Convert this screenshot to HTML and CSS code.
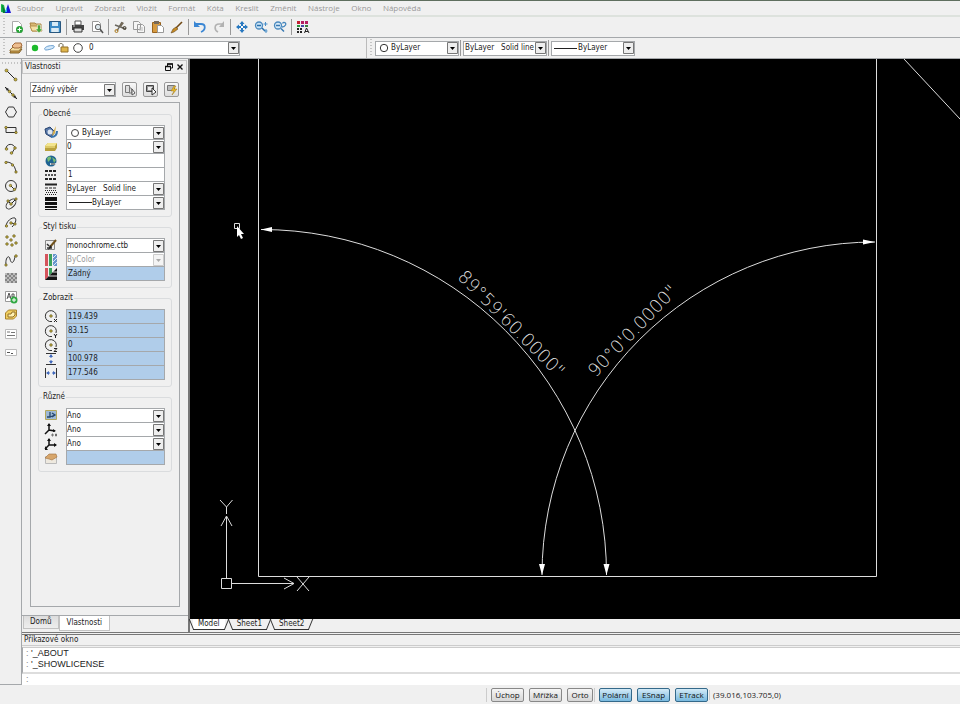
FILE: index.html
```html
<!DOCTYPE html>
<html lang="cs">
<head>
  <meta charset="UTF-8" />
  <meta name="viewport" content="width=device-width, initial-scale=1.0" />
  <title>CAD</title>
  <link rel="stylesheet" href="styles.css">
</head>
<body>
  <nav class="menubar">
    <svg class="logo" viewBox="0 0 12 12"><path d="M1 2l3 1 2 8-5-1z" fill="#18b848"/><path d="M2 2l4 9H3z" fill="#087a35"/><path d="M8 2l3 9H5z" fill="#1717d8"/><path d="M7 5v5H5z" fill="#20c0e8"/></svg>
    <div class="menu">
      <a href="#">Soubor</a>
      <a href="#">Upravit</a>
      <a href="#">Zobrazit</a>
      <a href="#">Vložit</a>
      <a href="#">Formát</a>
      <a href="#">Kóta</a>
      <a href="#">Kreslit</a>
      <a href="#">Změnit</a>
      <a href="#">Nástroje</a>
      <a href="#">Okno</a>
      <a href="#">Nápověda</a>
    </div>
  </nav>

  <!-- Standard toolbar -->
  <div class="toolbar">
    <span class="grip"></span>
    <button class="icon-btn" aria-label="Nový"><svg viewBox="0 0 14 14"><path d="M2.500 1.500h6l3 3v8h-9z" fill="#fff" stroke="#aaa"/><circle cx="9.500" cy="9.500" r="3.500" fill="#28a338"/><path d="M9.500 7.500v4M7.500 9.500h4" stroke="#fff"/></svg></button>
    <button class="icon-btn" aria-label="Otevřít"><svg viewBox="0 0 14 14"><path d="M1 3h5l1 1h5v7H3z" fill="#d8b873" stroke="#ac8646"/><path d="M1 6h10l2 5H3z" fill="#f5dfa2" stroke="#b79350"/><path d="M8.500 5v4h-2l3.500 4 3.500-4h-2V5z" fill="#4aa636" stroke="#fff" stroke-width=".5"/></svg></button>
    <button class="icon-btn" aria-label="Uložit"><svg viewBox="0 0 14 14"><path d="M1.500 1.500h11v11h-11z" fill="#3c8ac6" stroke="#28577f"/><path d="M4 2h6v4H4z" fill="#d6eaf6"/><path d="M3 8h8v4H3z" fill="#b7d6e9"/><path d="M4 9h6M4 11h6" stroke="#fff"/></svg></button>
    <span class="sep"></span>
    <button class="icon-btn" aria-label="Tisk"><svg viewBox="0 0 14 14"><path d="M4 1h6v4H4z" fill="#fff" stroke="#555"/><path d="M1 5h12v5H1z" fill="#444"/><path d="M3 8h8v4H3z" fill="#ddd" stroke="#333"/><path d="M2 6h2" stroke="#ccc"/></svg></button>
    <button class="icon-btn" aria-label="Náhled"><svg viewBox="0 0 14 14"><path d="M2.500 1.500h6l2 2v8h-8z" fill="#fff" stroke="#999"/><circle cx="8" cy="7" r="2.700" fill="#dce6eb" stroke="#666"/><path d="M10 9l3 4" stroke="#555" stroke-width="1.500"/></svg></button>
    <span class="sep"></span>
    <button class="icon-btn" aria-label="Vyjmout"><svg viewBox="0 0 14 14"><path d="M2 5l11 4M9 2L4 11" stroke="#6b6860" stroke-width="1.500"/><path d="M6 6l3-4 2 1-3 4z" fill="#746a58"/><circle cx="11.500" cy="8" r="1.500" fill="none" stroke="#423b2c"/><circle cx="3.500" cy="11" r="1.500" fill="none" stroke="#ac7b1f"/></svg></button>
    <button class="icon-btn" aria-label="Kopírovat"><svg viewBox="0 0 14 14"><path d="M1.500 1.500h5l2 2v6h-7zM5.500 4.500h5l2 2v6h-7z" fill="#f5f5f5" stroke="#999"/><path d="M7 8h4M7 10h4" stroke="#bbb"/></svg></button>
    <button class="icon-btn" aria-label="Vložit"><svg viewBox="0 0 14 14"><path d="M1.500 2.500h8v10h-8z" fill="#d69a40" stroke="#98631e"/><path d="M3 1h5v3H3z" fill="#776958"/><path d="M6.500 5.500h4l2 2v5h-6z" fill="#fff" stroke="#999"/></svg></button>
    <button class="icon-btn" aria-label="Štětec"><svg viewBox="0 0 14 14"><path d="M12 2L6 8" stroke="#704814" stroke-width="1.600"/><path d="M6 7l2 2-4 3-3 1 2-4z" fill="#c58a24" stroke="#533816" stroke-width=".5"/></svg></button>
    <span class="sep"></span>
    <button class="icon-btn" aria-label="Zpět"><svg viewBox="0 0 14 14"><path d="M3 4h5c5 0 5 6 0 8" fill="none" stroke="#3b87d4" stroke-width="1.800"/><path d="M1 1v6h6z" fill="#3b87d4"/></svg></button>
    <button class="icon-btn" aria-label="Znovu"><svg viewBox="0 0 14 14"><path d="M11 4H7c-5 0-5 6-1 8" fill="none" stroke="#b2b2b2" stroke-width="1.600"/><path d="M12 1v6H7z" fill="#b2b2b2"/></svg></button>
    <span class="sep"></span>
    <button class="icon-btn" aria-label="Posun"><svg viewBox="0 0 14 14"><path d="M7 1l2.500 3H8v2h2V4.500L13 7l-3 2.500V8H8v2h1.500L7 13l-2.500-3H6V8H4v1.500L1 7l3-2.500V6h2V4H4.500z" fill="#2878c0"/><path d="M6 6h2v2H6z" fill="#fff"/></svg></button>
    <button class="icon-btn" aria-label="Zoom"><svg viewBox="0 0 14 14"><circle cx="5" cy="5.500" r="3.500" fill="#cbe4f7" stroke="#4c8abf" stroke-width="1.300"/><path d="M3 5.500h4M8 8l3 3" stroke="#2870ad" stroke-width="1.500"/><path d="M11.500 2v4M9.500 4h4M12 9v4M10.500 11h3" stroke="#4a90ca"/></svg></button>
    <button class="icon-btn" aria-label="Předchozí zoom"><svg viewBox="0 0 14 14"><circle cx="5" cy="5.500" r="3.500" fill="#d8ebf8" stroke="#4c8abf" stroke-width="1.300"/><path d="M3 5.500h4M8 8.500l3 3" stroke="#3979b2" stroke-width="1.500"/><path d="M9.500 3.500c1-2 4-1 3 1.500-1 2-2 2-3.500 2" fill="none" stroke="#4687bd" stroke-width="1.300"/></svg></button>
    <span class="sep"></span>
    <button class="icon-btn" aria-label="Vlastnosti"><svg viewBox="0 0 14 14"><path d="M1 1h3v3H1z" fill="#c41f32"/><path d="M5 1h3v3H5zM9 1h3v3H9z" fill="#b52060"/><path d="M1 5h3v2H1z" fill="#27963c"/><path d="M5 5h3v2H5z" fill="#4250a8"/><path d="M9 5h3v2H9z" fill="#39803c"/><path d="M1 9h6M1 12h6" stroke="#222" stroke-width="2" stroke-dasharray="2 1"/><path d="M8.500 13l2-5 2.500 5M9 11.500h3" fill="none" stroke="#222"/></svg></button>
  </div>

  <!-- Layers and object properties -->
  <div class="toolbar layers">
    <span class="grip"></span>
    <button class="icon-btn" aria-label="Hladiny"><svg viewBox="0 0 14 14"><path d="M1 11l3-3h9l-3 4H1z" fill="#c69a45" stroke="#80602b"/><path d="M1 9l3-3h9l-3 4H1z" fill="#f3dd9e" stroke="#977339"/><path d="M3 5l3-3h6l1 3-3 2H5z" fill="#edbe90" stroke="#a36b3c"/></svg></button>
    <span class="combo layer-combo">
      <svg class="layer-state" viewBox="0 0 54 12"><circle cx="5" cy="6" r="3.200" fill="#1dbb2c"/><path d="M15 6c1-2 7-3 9-2 2 2-5 4-8 4-1 0-2-1-1-2z" fill="#d6eafa" stroke="#6a9ed0"/><path d="M29 5V3c0-2 4-2 4 0v2" fill="none" stroke="#6a654e"/><path d="M31 5h7v5h-7z" fill="#dfb64c" stroke="#94702a"/><circle cx="48" cy="6" r="4.300" fill="none" stroke="#444"/></svg>
      <select aria-label="Hladina"><option>0</option></select>
    </span>
    <span class="toolbar-break"></span>
    <span class="grip"></span>
    <span class="combo color-combo">
      <svg class="swatch" viewBox="0 0 10 10"><circle cx="5" cy="5" r="3.700" fill="none" stroke="#333"/></svg>
      <select aria-label="Barva"><option>ByLayer</option></select>
    </span>
    <span class="sep tall"></span>
    <span class="combo type-combo"><select aria-label="Typ čáry"><option>ByLayer&nbsp;&nbsp; Solid line</option></select></span>
    <span class="sep tall"></span>
    <span class="combo weight-combo"><span class="stroke"></span><select aria-label="Tloušťka čáry"><option>ByLayer</option></select></span>
  </div>

  <div class="workspace">
    <aside class="tools">
      <span class="grip-h"></span>
      <div class="tool-list">
        <button class="icon-btn" aria-label="Úsečka"><svg viewBox="0 0 14 14"><path d="M2 2l10 10" stroke="#222"/><circle cx="2.500" cy="2.500" r="1.500" class="node"/><circle cx="11.500" cy="11.500" r="1.500" class="node"/></svg></button>
        <button class="icon-btn" aria-label="Přímka"><svg viewBox="0 0 14 14"><path d="M1 1l12 12" stroke="#222"/><path d="M1 1l4 2-2 2zM13 13l-4-2 2-2z" fill="#222"/><circle cx="5.500" cy="5.500" r="1.300" class="node"/><circle cx="9" cy="9" r="1.300" class="node"/></svg></button>
        <button class="icon-btn" aria-label="Polygon"><svg viewBox="0 0 14 14"><path d="M4.500 2h5L12.500 7l-3 5h-5l-3-5z" class="ink"/></svg></button>
        <button class="icon-btn" aria-label="Obdélník"><svg viewBox="0 0 14 14"><path d="M2 4.500h10v5H2z" class="ink"/><circle cx="2" cy="4.500" r="1.200" class="node"/><circle cx="12" cy="9.500" r="1.200" class="node"/></svg></button>
        <button class="icon-btn" aria-label="Oblouk"><svg viewBox="0 0 14 14"><path d="M2 7c0-6 8-6 9-1l-3 5" class="ink"/><circle cx="2.500" cy="7" r="1.300" class="node"/><circle cx="11" cy="6" r="1.300" class="node"/><circle cx="7.500" cy="11" r="1.300" class="node"/></svg></button>
        <button class="icon-btn" aria-label="Oblouk třemi body"><svg viewBox="0 0 14 14"><path d="M2 2c6 0 9 4 10 10" class="ink"/><circle cx="2" cy="2.500" r="1.200" class="node"/><circle cx="8.500" cy="5" r="1.200" class="node"/><circle cx="12" cy="12" r="1.200" class="node"/></svg></button>
        <button class="icon-btn" aria-label="Kružnice"><svg viewBox="0 0 14 14"><circle cx="7" cy="7" r="5.500" class="ink"/><path d="M6.500 6.500l4 4" stroke="#222"/><circle cx="6.500" cy="6.500" r="1.200" class="node"/><circle cx="10.500" cy="10.500" r="1.200" class="node"/></svg></button>
        <button class="icon-btn" aria-label="Elipsa"><svg viewBox="0 0 14 14"><ellipse cx="7" cy="7" rx="6" ry="3.500" transform="rotate(-45 7 7)" class="ink"/><path d="M7 7l5-5M4 4l3 3" stroke="#222"/><circle cx="7" cy="7" r="1.300" class="node"/><circle cx="12" cy="2" r="1.200" class="node"/><circle cx="4" cy="4" r="1.200" class="node"/></svg></button>
        <button class="icon-btn" aria-label="Eliptický oblouk"><svg viewBox="0 0 14 14"><path d="M2 11C2 5 8 1 11 2c2 2 0 6-3 9M7 7l4 1" class="ink"/><circle cx="2.500" cy="10" r="1.200" class="node"/><circle cx="7" cy="7" r="1.300" class="node"/><circle cx="11" cy="8" r="1.200" class="node"/></svg></button>
        <button class="icon-btn" aria-label="Body"><svg viewBox="0 0 14 14"><circle cx="3" cy="3" r="1.300" class="node"/><circle cx="10" cy="2" r="1.300" class="node"/><circle cx="7" cy="6" r="1.300" class="node"/><circle cx="3" cy="10" r="1.300" class="node"/><circle cx="8" cy="11" r="1.300" class="node"/><circle cx="12" cy="9" r="1.300" class="node"/></svg></button>
        <button class="icon-btn" aria-label="Spline"><svg viewBox="0 0 14 14"><path d="M2 12C1 5 5 1 6 6s4 5 5-3" class="ink"/><circle cx="2" cy="12" r="1.200" class="node"/><circle cx="12" cy="3" r="1.300" class="node"/></svg></button>
        <button class="icon-btn" aria-label="Šrafy"><svg viewBox="0 0 14 14"><path d="M1 2h12v10H1z" fill="#bbb"/><path d="M1 6l4-4M1 10l8-8M3 12L13 2M7 12l6-6M11 12l2-2M1 8l4 4M1 4l8 8M3 2l10 10M7 2l6 6M11 2l2 2" stroke="#777" stroke-width=".8"/></svg></button>
        <button class="icon-btn" aria-label="Text"><svg viewBox="0 0 14 14"><path d="M1.500 1.500h11v10h-11z" fill="#fff" stroke="#999"/><path d="M3 9l2-6 2 6M4 7h3M8 4h2v3H8z" fill="none" stroke="#555"/><circle cx="10" cy="10" r="3.500" fill="#31a843"/><path d="M10 8v4M8 10h4" stroke="#fff"/></svg></button>
        <button class="icon-btn" aria-label="Blok"><svg viewBox="0 0 14 14"><path d="M1.500 5l3-3h8v6l-3 3h-8z" fill="#f1cf60" stroke="#a7812d"/><path d="M4 6h3l1-2h3v3L9 9H4z" fill="#fff1b2" stroke="#92702a"/></svg></button>
        <button class="icon-btn" aria-label="Odstavec"><svg viewBox="0 0 14 14"><path d="M1.500 2.500h11v9h-11z" fill="#fff" stroke="#bbb"/><path d="M3 5h3M7 5.500h4M3 8.500h8" stroke="#777"/></svg></button>
        <button class="icon-btn" aria-label="Řádek textu"><svg viewBox="0 0 14 14"><path d="M1.500 4.500h11v6h-11z" fill="#fff" stroke="#bbb"/><path d="M3 7.500h3M7 8.500h2" stroke="#555"/></svg></button>
      </div>
    </aside>

    <main class="content">
      <div class="upper">
        <section class="dock">
          <header class="dock-title">
            <span>Vlastnosti</span>
            <button class="title-btn" aria-label="Uvolnit"><svg viewBox="0 0 8 8"><path d="M2.500 3V1h5v4H6M.500 3.500h5v4h-5z" fill="none" stroke="#111"/><path d="M2 1h6M0 3.500h6" stroke="#111" stroke-width="1.500"/></svg></button>
            <button class="title-btn" aria-label="Zavřít"><svg viewBox="0 0 8 8"><path d="M1.500 1.500l5 5M6.500 1.500l-5 5" stroke="#111" stroke-width="1.400"/></svg></button>
          </header>

          <div class="selection">
            <span class="combo"><select aria-label="Výběr"><option>Žádný výběr</option></select></span>
            <button class="pick-btn" aria-label="Vybrat"><svg viewBox="0 0 12 12"><path d="M1.500 1.500h4v7h-4zM5 3l3 2v4H5" fill="#ddd" stroke="#777"/><path d="M8 5v6l3-2z" fill="#fff" stroke="#555"/></svg></button>
            <button class="pick-btn" aria-label="Rychlý výběr"><svg viewBox="0 0 12 12"><path d="M1.500 1.500h7v6h-7z" fill="#999" stroke="#444"/><path d="M3 3h4v3H3z" fill="#eee"/><path d="M7 4v7l4-3z" fill="#fff" stroke="#333"/></svg></button>
            <button class="pick-btn" aria-label="Filtr"><svg viewBox="0 0 12 12"><path d="M1.500 1.500h7v5h-7z" fill="#bbb" stroke="#777"/><path d="M8 2L5 7h3l-2 4 5-6H8l2-3z" fill="#e8b92b" stroke="#9c7718" stroke-width=".5"/></svg></button>
          </div>

          <form class="properties">
            <fieldset>
              <legend>Obecné</legend>
              <div class="rows">
                <label class="row"><svg viewBox="0 0 14 14"><path d="M1 4l5-2 5 5-4 5-5-3z" fill="#5878a9" stroke="#26436f"/><circle cx="6" cy="7" r="2.500" fill="#dbe5f1"/><path d="M12 1l-1 7-3 3 1-4z" fill="#d5ad47"/><path d="M13 6c0 5-3 6-6 6" stroke="#3774ad" stroke-width="2" fill="none"/></svg>
                  <span class="cell"><i class="ring"></i><select aria-label="Barva"><option>ByLayer</option></select></span></label>
                <label class="row"><svg viewBox="0 0 14 14"><path d="M1 6l3-3h9v5l-2 3H1z" fill="#b9a13c"/><path d="M1 6l3-3h9l-2 3z" fill="#f3e58d"/><path d="M1 6h10v2H1z" fill="#ddc967"/></svg>
                  <span class="cell"><select aria-label="Hladina"><option>0</option></select></span></label>
                <label class="row"><svg viewBox="0 0 14 14"><circle cx="7" cy="7" r="5.500" fill="#1e6392"/><path d="M3 4c3-3 5-1 4 1L4 8zM8 3l4 3-2 3z" fill="#75bc74"/><path d="M6 10h6" stroke="#c8dce8" stroke-width="2"/><path d="M7 10h4" stroke="#333"/></svg>
                  <span class="cell"><input type="text" aria-label="Odkaz"></span></label>
                <label class="row"><svg viewBox="0 0 14 14"><path d="M1 3h12M1 11h12" stroke="#222" stroke-width="2" stroke-dasharray="3 1"/><path d="M1 7h12" stroke="#222" stroke-width="1.500" stroke-dasharray="2 1"/></svg>
                  <span class="cell"><input type="text" value="1" aria-label="Měřítko čáry"></span></label>
                <label class="row"><svg viewBox="0 0 14 14"><path d="M1 2.500h12" stroke="#222" stroke-width="2"/><path d="M1 6h12" stroke="#222" stroke-dasharray="3 1"/><path d="M1 8.500h12M2 10.500h11M1 12.500h12" stroke="#222" stroke-dasharray="1 1"/></svg>
                  <span class="cell"><select aria-label="Typ čáry"><option>ByLayer&nbsp;&nbsp; Solid line</option></select></span></label>
                <label class="row"><svg viewBox="0 0 14 14"><path d="M1 1h12v4H1zM1 6h12v3H1zM1 10h12v2H1zM1 13h12v1H1z" fill="#111"/></svg>
                  <span class="cell"><i class="stroke"></i><select aria-label="Tloušťka čáry"><option>ByLayer</option></select></span></label>
              </div>
            </fieldset>

            <fieldset>
              <legend>Styl tisku</legend>
              <div class="rows">
                <label class="row"><svg viewBox="0 0 14 14"><path d="M1.500 2.500h9v9h-9z" fill="#eee" stroke="#888"/><path d="M3 6l2 2M3 10h5" stroke="#333" stroke-width="1.500"/><path d="M12 2L6 9" stroke="#70531e" stroke-width="2"/><path d="M6 7l2 2-4 3z" fill="#222"/></svg>
                  <span class="cell"><select aria-label="Tabulka stylů"><option>monochrome.ctb</option></select></span></label>
                <label class="row"><svg viewBox="0 0 14 14"><path d="M1 1h3v12H1z" fill="#d5545c"/><path d="M5 1h3v12H5z" fill="#3ba15c"/><path d="M9 1h4v12H9z" fill="#6795cc"/><path d="M9 5l4-4M9 9l4-4M9 13l4-4" stroke="#dbe8f5"/></svg>
                  <span class="cell"><select aria-label="Styl" disabled><option>ByColor</option></select></span></label>
                <label class="row"><svg viewBox="0 0 14 14"><path d="M1 1h3v9l-3 3z" fill="#d5545c"/><path d="M5 1h3v5L5 9z" fill="#3ba15c"/><path d="M13 1v12H1z" fill="#151515"/><path d="M9 5h4M5 9h8" stroke="#ddd"/></svg>
                  <span class="cell locked"><input type="text" value="Žádný" readonly aria-label="Tisk"></span></label>
              </div>
            </fieldset>

            <fieldset>
              <legend>Zobrazit</legend>
              <div class="rows">
                <label class="row"><svg viewBox="0 0 14 14"><path d="M12 9a5.500 5.500 0 1 0-4 3.500" class="ink"/><circle cx="7" cy="7" r="1.300" class="node"/><path d="M10 10l3 3M13 10l-3 3" stroke="#222"/></svg>
                  <span class="cell locked"><input type="text" value="119.439" readonly aria-label="Střed X"></span></label>
                <label class="row"><svg viewBox="0 0 14 14"><path d="M12 9a5.500 5.500 0 1 0-4 3.500" class="ink"/><circle cx="7" cy="7" r="1.300" class="node"/><path d="M10 10l1.500 2L13 10M11.500 11v3" fill="none" stroke="#222"/></svg>
                  <span class="cell locked"><input type="text" value="83.15" readonly aria-label="Střed Y"></span></label>
                <label class="row"><svg viewBox="0 0 14 14"><path d="M12 9a5.500 5.500 0 1 0-4 3.500" class="ink"/><circle cx="7" cy="7" r="1.300" class="node"/><path d="M10 10.500h3l-3 3h3" fill="none" stroke="#222"/></svg>
                  <span class="cell locked"><input type="text" value="0" readonly aria-label="Střed Z"></span></label>
                <label class="row"><svg viewBox="0 0 14 14"><path d="M2 1.500h10M2 12.500h10" stroke="#333"/><path d="M7 3v3M7 8v3" stroke="#4169bc"/><path d="M5 5h4L7 2zM5 9h4l-2 3z" fill="#4169bc"/></svg>
                  <span class="cell locked"><input type="text" value="100.978" readonly aria-label="Výška"></span></label>
                <label class="row"><svg viewBox="0 0 14 14"><path d="M1.500 2v10M12.500 2v10" stroke="#333"/><path d="M3 7h3M8 7h3" stroke="#4169bc"/><path d="M5 5v4L2 7zM9 5v4l3-2z" fill="#4169bc"/></svg>
                  <span class="cell locked"><input type="text" value="177.546" readonly aria-label="Šířka"></span></label>
              </div>
            </fieldset>

            <fieldset>
              <legend>Různé</legend>
              <div class="rows">
                <label class="row"><svg viewBox="0 0 14 14"><path d="M1.500 2.500h11v9h-11z" fill="#9db9d5" stroke="#b3a85b"/><path d="M6 4v5H3M6 9l5-2M8 5l3 2-3 2" fill="none" stroke="#26476c" stroke-width="1.300"/></svg>
                  <span class="cell"><select aria-label="Ikona USS"><option>Ano</option></select></span></label>
                <label class="row"><svg viewBox="0 0 14 14"><path d="M5 1v6l6 1M5 7l-4 4" fill="none" stroke="#111" stroke-width="1.500"/><path d="M3 3l2-3 2 3zM9 6l3 2-3 1z" fill="#111"/><path d="M8 11h1v2H8zM11.500 11h1v2h-1z" fill="none" stroke="#555" stroke-width=".8"/></svg>
                  <span class="cell"><select aria-label="USS v počátku"><option>Ano</option></select></span></label>
                <label class="row"><svg viewBox="0 0 14 14"><path d="M5 2v6h7M5 8l-4 4" fill="none" stroke="#111" stroke-width="1.500"/><path d="M3 4l2-3 2 3zM10 6l3 2-3 2zM1 9v4h3z" fill="#111"/></svg>
                  <span class="cell"><select aria-label="USS na výřez"><option>Ano</option></select></span></label>
                <label class="row"><svg viewBox="0 0 14 14"><path d="M1.500 5.500h11v7h-11z" fill="#eee9df" stroke="#bbb"/><path d="M1 7l4-4h7l1 3-5 3-3-1z" fill="#d7a66b" stroke="#9f7040" stroke-width=".6"/></svg>
                  <span class="cell locked"><input type="text" readonly aria-label="Název USS"></span></label>
              </div>
            </fieldset>
          </form>

          <div class="dock-tabs">
            <button>Domů</button>
            <button class="active">Vlastnosti</button>
          </div>
        </section>

        <section class="drawing">
          <svg class="canvas" role="img" aria-label="Výkres">
            <g transform="translate(-190 -59)">
              <g class="geometry">
                <path d="M258.500 50v526.500h618V50" />
                <path d="M904 59l70 75" />
                <path d="M261 229.500A345 345 0 0 1 606.500 575" />
                <path d="M875 242A333 333 0 0 0 542 575" />
              </g>
              <path class="arrow" d="M261 229.500l11-2.500v5zM875 242l-12-2.500v5zM542 575l-3-11h6zM606.500 575l-3-11h6z" />
              <text class="dim" transform="translate(507 328) rotate(45)">89°59'60.0000"</text>
              <text class="dim" transform="translate(637 335) rotate(-46)">90°0'0.0000"</text>
              <!-- UCS icon -->
              <g class="geometry">
                <path d="M221.500 578.500h10v10h-10zM226.500 578v-61M221 526l5.500-10 5.500 10M232 583.500h62M284 578l10 5.500-10 5.500" />
                <path d="M220 500l6.500 7 6-7M226.500 507v7M297 577l12 14M309 577l-12 14" />
              </g>
              <!-- Cursor -->
              <path d="M234.500 223.500h5v5h-5z" fill="none" stroke="#ddd" />
              <path d="M237 226v11l2-2 2 4 2-1-2-4h3z" fill="#fff" />
            </g>
          </svg>
          <div class="sheets">
            <button class="active">Model</button>
            <button>Sheet1</button>
            <button>Sheet2</button>
          </div>
        </section>
      </div>

      <section class="command">
        <header class="command-title">Příkazové okno</header>
        <div class="history">
          <p><span>:</span> '_ABOUT</p>
          <p><span>:</span> '_SHOWLICENSE</p>
        </div>
        <input class="prompt" type="text" value=":" aria-label="Příkaz">
      </section>
    </main>
  </div>

  <footer class="status">
    <div class="status-group">
      <button>Úchop</button>
      <button>Mřížka</button>
      <button class="short">Orto</button>
    </div>
    <div class="status-group">
      <button class="on">Polární</button>
      <button class="on">ESnap</button>
      <button class="on">ETrack</button>
    </div>
    <output>(39.016,103.705,0)</output>
  </footer>
</body>
</html>
```
FILE: styles.css
```css
:root {
  --face: #f0f0f0;
  --line: #a5a8ab;
  --soft-line: #dadcde;
  --locked: #b0cdea;
  --ui: "Open Sans", "Noto Sans", sans-serif;
  --panel: "DejaVu Sans Condensed", "DejaVu Sans", sans-serif;
  --arrow: url("data:image/svg+xml,%3Csvg xmlns='http://www.w3.org/2000/svg' width='11' height='12'%3E%3Cpath d='M.5 .5h10v11H.5z' fill='%23eee' stroke='%23777'/%3E%3Cpath d='M3 5h5L5.500 8z'/%3E%3C/svg%3E");
  --arrow-off: url("data:image/svg+xml,%3Csvg xmlns='http://www.w3.org/2000/svg' width='11' height='12'%3E%3Cpath d='M.5 .5h10v11H.5z' fill='%23f4f4f4' stroke='%23ccc'/%3E%3Cpath d='M3 5h5L5.500 8z' fill='%23aaa'/%3E%3C/svg%3E");
}

* {
  box-sizing: border-box;
}

body {
  margin: 0;
  height: 100vh;
  display: flex;
  flex-direction: column;
  background: var(--face);
  color: #222;
  font: 8px/10px var(--ui);
  overflow: hidden;
}

button,
input,
select {
  margin: 0;
  padding: 0;
  border: 0;
  border-radius: 0;
  background: none;
  color: inherit;
  font: inherit;
  min-width: 0;
}

select {
  appearance: none;
  flex: 1;
  height: 12px;
  padding-right: 11px;
  background: var(--arrow) right center no-repeat;
}

select:disabled {
  color: #999;
  opacity: 1;
  background-image: var(--arrow-off);
}

svg {
  display: block;
  flex: none;
}

.ink {
  fill: none;
  stroke: #333;
}

.node {
  fill: #c9b33f;
  stroke: #544b1c;
  stroke-width: 0.6;
}

/* === MENU === */
.menubar {
  display: flex;
  align-items: center;
  gap: 5px;
  height: 17px;
  border-top: 1px solid #5f6f5f;
  border-bottom: 2px solid #dde2dd;
}

.menu {
  display: flex;
  justify-content: space-between;
  width: 404px;
}

.menu a {
  color: #999;
  text-decoration: none;
}

.logo {
  width: 12px;
  height: 12px;
}

/* === TOOLBARS === */
.toolbar {
  display: flex;
  align-items: center;
  gap: 5px;
  height: 21px;
  padding-left: 3px;
  border-bottom: 1px solid var(--line);
}

.grip {
  width: 2px;
  height: 18px;
  background: repeating-linear-gradient(#c4c4c4 0 1px, transparent 1px 3px);
}

.icon-btn {
  width: 14px;
  height: 14px;
}

.icon-btn svg {
  width: 14px;
  height: 14px;
}

.sep {
  width: 1px;
  height: 16px;
  margin: 0 -1px;
  background: #999;
}

.sep.tall {
  margin-left: -2px;
}

.combo {
  display: flex;
  align-items: center;
  height: 15px;
  border: 1px solid var(--line);
  background: #fff;
}

.combo select {
  padding-left: 1px;
}

.layers {
  gap: 3px;
  font-family: var(--panel);
}

.layers .icon-btn {
  margin-left: 1px;
}

.layer-combo {
  width: 214px;
}

.layer-state {
  width: 54px;
  height: 12px;
  margin: 0 4px 0 3px;
}

.toolbar-break {
  width: 1px;
  height: 20px;
  margin-left: 123px;
  background: #bbb;
}

.swatch {
  width: 10px;
  height: 10px;
  margin: 0 1px 0 3px;
}

.color-combo,
.type-combo,
.weight-combo {
  width: 84px;
}

.stroke {
  flex: none;
  width: 23px;
  height: 1px;
  margin-left: 2px;
  background: #222;
}

/* === WORKSPACE === */
.workspace {
  flex: 1;
  display: flex;
  min-height: 0;
}

.tools {
  width: 22px;
  padding-top: 3px;
  border-right: 1px solid var(--line);
  border-bottom: 1px solid var(--line);
}

.grip-h {
  display: block;
  height: 2px;
  margin-left: 2px;
  background: repeating-linear-gradient(90deg, #c4c4c4 0 1px, transparent 1px 3px);
}

.tool-list {
  display: grid;
  grid-auto-rows: 19px 18px;
  justify-items: center;
  align-items: center;
  padding-top: 1px;
}

.content {
  flex: 1;
  display: flex;
  flex-direction: column;
  min-width: 0;
}

.upper {
  flex: 1;
  display: flex;
  min-height: 0;
}

/* === PROPERTIES DOCK === */
.dock {
  display: flex;
  flex-direction: column;
  width: 168px;
  border-right: 2px solid #777;
  font-family: var(--panel);
}

.dock-title {
  display: flex;
  align-items: center;
  gap: 3px;
  height: 14px;
  margin: 1px 1px 0 0;
  padding: 0 2px;
  border: 1px solid #c6c6c6;
}

.dock-title span {
  flex: 1;
}

.title-btn,
.title-btn svg {
  width: 8px;
  height: 8px;
}

.selection {
  display: flex;
  gap: 6px;
  padding: 8px 9px 4px 8px;
}

.selection .combo {
  flex: 1;
}

.pick-btn {
  display: grid;
  place-items: center;
  width: 15px;
  height: 15px;
  border: 1px solid #999;
  border-radius: 2px;
  background: linear-gradient(#f8f8f8, #ddd);
}

.pick-btn svg {
  width: 12px;
  height: 12px;
}

.properties {
  flex: 1;
  margin: 1px 8px 8px;
  padding: 6px 7px;
  border: 1px solid var(--line);
}

fieldset {
  min-width: 0;
  margin: 0 0 5px;
  padding: 6px 6px 6px 5px;
  border: 1px solid var(--soft-line);
  border-radius: 3px;
}

legend {
  margin-left: -2px;
  padding: 0 1px;
  line-height: 10px;
}

.row {
  display: flex;
  height: 14px;
}

.row svg {
  width: 14px;
  height: 14px;
  margin-right: 8px;
}

.cell {
  flex: 1;
  display: flex;
  align-items: center;
  min-width: 0;
  border: 1px solid var(--line);
  border-top: 0;
  background: #fff;
}

.row:first-child {
  height: 15px;
}

.row:first-child .cell {
  border-top: 1px solid var(--line);
}

.cell input {
  flex: 1;
  height: 12px;
  padding-left: 1px;
}

.cell.locked {
  background: var(--locked);
}

.ring {
  width: 8px;
  height: 8px;
  margin: 0 3px 0 4px;
  border: 1px solid #444;
  border-radius: 50%;
}

.dock-tabs {
  display: flex;
  align-items: flex-start;
  height: 17px;
  padding-left: 1px;
  border-top: 1px solid var(--line);
}

.dock-tabs button {
  height: 13px;
  padding: 0 6px;
  border: 1px solid #c2c2c2;
  border-top: 0;
  background: linear-gradient(#ddd, #eee);
}

.dock-tabs .active {
  height: 15px;
  padding: 0 7px;
  background: #fff;
}

/* === DRAWING === */
.drawing {
  flex: 1;
  display: flex;
  flex-direction: column;
  min-width: 0;
}

.canvas {
  flex: 1;
  width: 100%;
  min-height: 0;
  background: #000;
}

.geometry {
  fill: none;
  stroke: #ddd;
  stroke-width: 1;
}

.arrow {
  fill: #fff;
}

.dim {
  fill: #ddd;
  font: 200 18px "DejaVu Sans Light", "DejaVu Sans", sans-serif;
  text-anchor: middle;
}

.sheets {
  display: flex;
  gap: 7px;
  height: 13px;
  padding-left: 3px;
}

.sheets button {
  position: relative;
  height: 11px;
  padding: 0 5px;
  border-bottom: 1px solid #333;
  font-family: var(--panel);
}

.sheets button::before,
.sheets button::after {
  content: "";
  position: absolute;
  top: 0;
  bottom: -1px;
  width: 1px;
  background: #333;
}

.sheets button::before {
  left: -2px;
  transform: skewX(22deg);
}

.sheets button::after {
  right: -2px;
  transform: skewX(-22deg);
}

.sheets .active {
  background: #fff;
}

/* === COMMAND WINDOW === */
.command {
  display: flex;
  flex-direction: column;
  border-top: 3px double #777;
}

.command-title {
  height: 11px;
  padding-left: 2px;
  border-bottom: 1px solid #ccc;
  font-family: var(--panel);
}

.history {
  margin-top: 1px;
  padding: 0 3px 2px;
  border-top: 1px solid #ccc;
  border-left: 1px solid var(--line);
  border-bottom: 2px solid #ddd;
  background: #fff;
  font: 9px/11px "Liberation Sans", Arial, sans-serif;
}

.history p {
  margin: 0;
}

.history span {
  color: #888;
}

.prompt {
  height: 11px;
  padding-left: 4px;
  background: #fff;
  color: #888;
  font: 9px/11px "Liberation Sans", Arial, sans-serif;
}

/* === STATUS BAR === */
.status {
  display: flex;
  align-items: center;
  height: 19px;
  padding-left: 486px;
}

.status-group {
  display: flex;
  gap: 5px;
  padding: 0 1px 0 4px;
  border-left: 1px solid #ccc;
}

.status button {
  width: 33px;
  height: 14px;
  border: 1px solid #888;
  border-radius: 2px;
  background: linear-gradient(#f6f6f6, #d6d6d6);
  color: #111;
}

.status .short {
  width: 26px;
}

.status .on {
  border-color: #34698a;
  background: linear-gradient(#d3eaf7, #78b9df);
}

.status output {
  padding-left: 3px;
  border-left: 1px solid #ccc;
}
```
